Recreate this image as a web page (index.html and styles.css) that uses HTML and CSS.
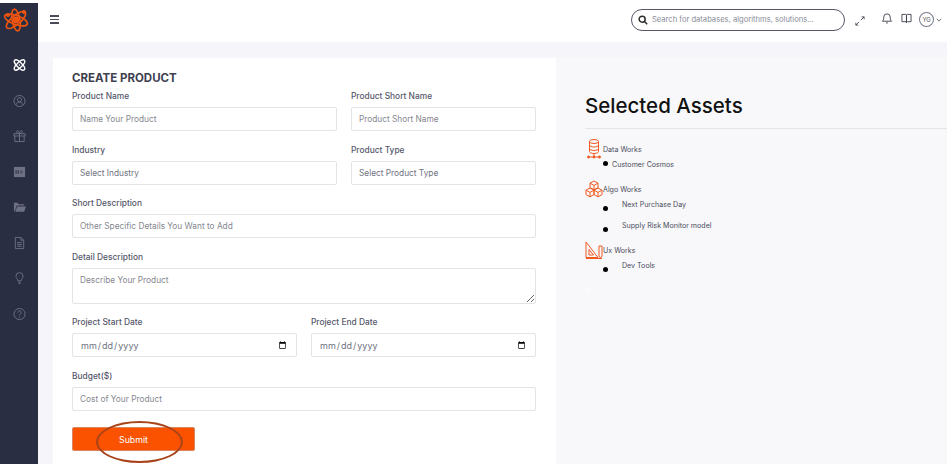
FILE: index.html
```html
<!DOCTYPE html>
<html>
  <head>
    <title>Create Product</title>
    <link rel="stylesheet" href="styles.css">
  </head>
  <body>
    <div class="app">
      <nav class="sidebar">
        <svg class="logo" viewBox="0 0 26 26" fill="none" stroke="#ee5510" stroke-width="1.600">
          <ellipse cx="13" cy="13" rx="12" ry="4.500" transform="rotate(20 13 13)"/>
          <ellipse cx="13" cy="13" rx="12" ry="4.500" transform="rotate(-40 13 13)"/>
          <ellipse cx="13" cy="13" rx="11" ry="4" transform="rotate(80 13 13)"/>
          <circle cx="13" cy="13" r="2.600" fill="#ee5510"/>
          <circle cx="21" cy="5" r="1.200" fill="#ee5510"/>
          <circle cx="5" cy="8" r="1.200" fill="#ee5510"/>
        </svg>
        <svg class="nav-icon" viewBox="0 0 14 14" fill="none" stroke="#fff" stroke-width="1.500">
          <ellipse cx="7" cy="7" rx="7.300" ry="2.800" transform="rotate(45 7 7)"/>
          <ellipse cx="7" cy="7" rx="7.300" ry="2.800" transform="rotate(-45 7 7)"/>
          <circle cx="7" cy="7" r=".8" fill="#fff" stroke="none"/>
        </svg>
        <svg class="nav-icon" viewBox="0 0 14 14" fill="none" stroke="#6e7183" stroke-width="1">
          <circle cx="7" cy="7" r="6"/>
          <circle cx="7" cy="5.600" r="2.200"/>
          <path d="M3 11.200c.8-2 2.200-2.800 4-2.800s3.200.8 4 2.800"/>
        </svg>
        <svg class="nav-icon" viewBox="0 0 14 14" fill="none" stroke="#6e7183" stroke-width="1">
          <path d="M1 4.500h12v2.500H1zM2 7v6h10V7M7 4.500V13M7 4.500C5 4.500 3.500 3.500 4 2s2.500-1 3 2.500c.5-3.500 2.500-4 3-2.500s-1 2.500-3 2.500"/>
        </svg>
        <svg class="nav-icon" viewBox="0 0 14 14">
          <rect x="1" y="1.500" width="12" height="11" fill="#6e7183"/>
          <path d="M3 5.500v3M3 5.500h1l.7 1.500-.7 1.500H3M6.500 5.500h-1v3h1M5.500 7h1M8 5.500l1 3 1-3" fill="none" stroke="#2a2e43" stroke-width=".7"/>
        </svg>
        <svg class="nav-icon" viewBox="0 0 14 14" fill="#6e7183">
          <path d="M1 2.500h4l1.200 1.500H12v1.500H4L2 11.500H1z"/>
          <path d="M4.500 6.500H14l-2 5.500H2.500z"/>
        </svg>
        <svg class="nav-icon" viewBox="0 0 14 14" fill="none" stroke="#6e7183" stroke-width="1">
          <path d="M2.500 1h6l3 3v9h-9zM8.500 1v3h3M4.500 6.500h5M4.500 8.500h5M4.500 10.500h5"/>
        </svg>
        <svg class="nav-icon" viewBox="0 0 14 14" fill="none" stroke="#6e7183" stroke-width="1">
          <path d="M5.200 10c0-1.700-2-2.700-2-5a3.800 3.800 0 0 1 7.600 0c0 2.300-2 3.300-2 5zM5.500 11.500h3M6 13h2"/>
        </svg>
        <svg class="nav-icon" viewBox="0 0 14 14" fill="none" stroke="#6e7183" stroke-width="1">
          <circle cx="7" cy="7" r="6"/>
          <path d="M5.200 5.400a1.800 1.800 0 1 1 2.800 1.500c-.7.500-1 .8-1 1.600M7 9.800v1"/>
        </svg>
      </nav>

      <div class="content">
        <header class="topbar">
          <div class="burger"><span></span><span></span><span></span></div>
          <div class="search">
            <svg class="search-icon" viewBox="0 0 12 12" fill="none" stroke="#2b2b2b" stroke-width="1.800">
              <circle cx="5" cy="5" r="3.600"/>
              <path d="M7.800 7.800l3.200 3.200"/>
            </svg>
            <span>Search for databases, algorithms, solutions...</span>
          </div>
          <svg class="expand" viewBox="0 0 12 12" fill="none" stroke="#3f4150" stroke-width="1">
            <path d="M7 5l4-4M8 1h3v3M5 7l-4 4M1 8v3h3"/>
          </svg>
          <svg class="bell" viewBox="0 0 12 13" fill="none" stroke="#3f4150" stroke-width="1">
            <path d="M1 10c1-1 1.500-1.500 1.500-4.500a3.500 3.500 0 0 1 7 0C9.500 8.500 10 9 11 10zM5 11.800h2"/>
          </svg>
          <svg class="book" viewBox="0 0 12 12" fill="none" stroke="#3f4150" stroke-width="1">
            <path d="M1 1.500h4c.6 0 1 .4 1 1v8c0-.6-.4-1-1-1H1zM11 1.500H7c-.6 0-1 .4-1 1v8c0-.6.4-1 1-1h4z"/>
          </svg>
          <div class="avatar">YG</div>
          <svg class="caret" viewBox="0 0 8 5" fill="none" stroke="#3f4150" stroke-width="1"><path d="M1 1l3 3 3-3"/></svg>
        </header>

        <main class="page">
          <form class="card">
            <h2 class="card-title">CREATE PRODUCT</h2>
            <div class="row row-main">
              <div class="field">
                <label>Product Name</label>
                <input type="text" placeholder="Name Your Product">
              </div>
              <div class="field">
                <label>Product Short Name</label>
                <input type="text" placeholder="Product Short Name">
              </div>
            </div>
            <div class="row row-main">
              <div class="field">
                <label>Industry</label>
                <select><option>Select Industry</option></select>
              </div>
              <div class="field">
                <label>Product Type</label>
                <select><option>Select Product Type</option></select>
              </div>
            </div>
            <div class="field">
              <label>Short Description</label>
              <input type="text" placeholder="Other Specific Details You Want to Add">
            </div>
            <div class="field">
              <label>Detail Description</label>
              <textarea placeholder="Describe Your Product"></textarea>
            </div>
            <div class="row row-dates">
              <div class="field">
                <label>Project Start Date</label>
                <input type="date">
              </div>
              <div class="field">
                <label>Project End Date</label>
                <input type="date">
              </div>
            </div>
            <div class="field">
              <label>Budget($)</label>
              <input type="text" placeholder="Cost of Your Product">
            </div>
            <div class="submit-wrap">
              <button class="submit" type="button">Submit</button>
              <div class="circle-mark"></div>
            </div>
          </form>

          <aside class="assets">
            <h1 class="assets-title">Selected Assets</h1>
            <div class="asset-group">
              <div class="group-head group-data">
                <svg class="group-icon icon-data" viewBox="0 0 14 20" fill="none" stroke="#f0591f" stroke-width="1">
                  <ellipse cx="7" cy="2.500" rx="4.500" ry="2"/>
                  <path d="M2.500 2.500v10c0 1.100 2 2 4.500 2s4.500-.9 4.500-2v-10M2.500 6c0 1.100 2 2 4.500 2s4.500-.9 4.500-2M2.500 9.500c0 1.100 2 2 4.500 2s4.500-.9 4.500-2M7 14.500V18M1 18h12"/>
                  <circle cx="1.500" cy="18" r="1" fill="#f0591f"/>
                  <circle cx="7" cy="18" r="1" fill="#f0591f"/>
                  <circle cx="12.500" cy="18" r="1" fill="#f0591f"/>
                </svg>
                <span>Data Works</span>
              </div>
              <div class="asset asset-near"><i class="dot"></i><span>Customer Cosmos</span></div>
            </div>
            <div class="asset-group">
              <div class="group-head group-algo">
                <svg class="group-icon icon-algo" viewBox="0 0 18 18" fill="none" stroke="#f0591f" stroke-width="1">
                  <path d="M9 1l4 2.200v4.400L9 9.800 5 7.600V3.200zM5 3.200l4 2.200 4-2.200M9 5.400v4.400"/>
                  <path d="M5 8l4 2.200v4.400L5 16.800l-4-2.200v-4.400zM1 10.200l4 2.200 4-2.200M5 12.400v4.400"/>
                  <path d="M13 8l4 2.200v4.400l-4 2.200-4-2.200v-4.400zM9 10.200l4 2.200 4-2.200M13 12.400v4.400"/>
                </svg>
                <span>Algo Works</span>
              </div>
              <div class="asset"><i class="dot"></i><span>Next Purchase Day</span></div>
              <div class="asset"><i class="dot"></i><span>Supply Risk Monitor model</span></div>
            </div>
            <div class="asset-group">
              <div class="group-head group-ux">
                <svg class="group-icon icon-ux" viewBox="0 0 18 18" fill="none" stroke="#f0591f" stroke-width="1">
                  <path d="M1 1l12 15.500H1zM4 8.500l4.500 5.500H4zM1 17.500h16"/>
                  <path d="M14 5h3v10l-1.500 2-1.500-2z"/>
                </svg>
                <span>Ux Works</span>
              </div>
              <div class="asset"><i class="dot"></i><span>Dev Tools</span></div>
            </div>
            <div class="asset-count">0</div>
          </aside>
        </main>
      </div>
    </div>
  </body>
</html>
```

FILE: styles.css
```css
* { box-sizing: border-box; }
html, body { height: 100%; }
body { margin: 0; overflow: hidden; background: #fff; font-family: "Inter", "Open Sans", sans-serif; color: #4a4c5a; }

.app { display: flex; height: 464px; padding-top: 3px; }
.sidebar { width: 38px; flex: none; background: #2a2e43; display: flex; flex-direction: column; align-items: center; }
.logo { width: 26px; height: 26px; margin: 4px 7px 25px 0; }
.nav-icon { width: 13px; height: 14px; margin-bottom: 21.500px; }

.content { flex: 1; min-width: 0; display: flex; flex-direction: column; margin-top: -3px; }
.topbar { height: 42px; flex: none; background: #fff; display: flex; align-items: center; padding: 0 5px 3px 12px; }
.burger { width: 9px; display: flex; flex-direction: column; gap: 2px; margin-right: 572px; }
.burger span { height: 1.500px; background: #4a4c5a; }
.search { width: 215px; height: 22px; border: 1px solid #55586a; border-radius: 11px; display: flex; align-items: center; padding-left: 6px; font-size: 7.600px; color: #8a8c98; white-space: nowrap; }
.search-icon { width: 10px; height: 10px; margin-right: 4px; flex: none; }
.expand { width: 10px; height: 10px; margin-left: 10px; margin-top: 2px; }
.bell { width: 12px; height: 12px; margin-left: 16px; margin-top: -3px; }
.book { width: 11px; height: 11px; margin-left: 8px; margin-top: -3px; }
.avatar { width: 15px; height: 15px; margin-left: 7px; border: 1px solid #777a88; border-radius: 50%; font-size: 6px; display: flex; align-items: center; justify-content: center; color: #555; }
.caret { width: 6px; height: 4px; margin-left: 2px; }

.page { flex: 1; min-height: 0; background: #f5f5fa; padding: 16px 0 0 15px; display: flex; }
.card { width: 503px; flex: none; background: #fff; padding: 13px 20px 0 19px; display: flex; flex-direction: column; }
.card-title { margin: 0 0 6px; font-size: 11.500px; line-height: 14px; font-weight: 700; color: #3f4150; }

.row { display: grid; gap: 14px; }
.row-main { grid-template-columns: 265px 185px; }
.row-dates { grid-template-columns: 225px 225px; }
.field { display: flex; flex-direction: column; padding-bottom: 13.500px; }
.field label { font-size: 8.400px; line-height: 11px; font-weight: 500; color: #55576a; margin-bottom: 5px; }
.field input, .field select, .field textarea { width: 100%; height: 24px; border: 1px solid #e3e4e8; border-radius: 2px; background: #fff; padding: 0 7px; margin: 0; font-family: inherit; font-size: 8.300px; color: #6f7280; outline: none; }
.field select { appearance: none; -webkit-appearance: none; }
.field input::placeholder, .field textarea::placeholder { color: #85878f; opacity: 1; }
.field input[type="date"] { font-size: 9px; }
.field textarea { height: 36px; padding-top: 6px; display: block; resize: vertical; }

.submit-wrap { position: relative; margin-top: 3px; }
.submit { width: 123px; height: 24px; background: #fb5200; border: 1px solid #d8865f; border-radius: 2px; color: #fff; font-family: inherit; font-size: 8.800px; display: block; }
.circle-mark { position: absolute; left: 24px; top: -6px; width: 87px; height: 42px; border: 2px solid #a8431a; border-radius: 50%; pointer-events: none; }

.assets { flex: 1; min-width: 0; background: #f8f8fb; padding: 36px 0 0 29px; font-size: 7.100px; color: #4a4c5a; }
.assets-title { margin: 0; padding-bottom: 10px; border-bottom: 1px solid #e4e4e8; font-size: 20.500px; line-height: 24px; font-weight: 500; color: #111; }
.asset-group { display: flex; flex-direction: column; }
.group-head { display: flex; align-items: center; height: 18px; }
.group-data { margin-top: 11px; }
.group-algo { margin-top: 4px; }
.group-ux { margin-top: 1px; }
.group-icon { flex: none; }
.icon-data { width: 14px; height: 20px; margin: 0 2px; }
.icon-algo { width: 18px; height: 18px; }
.icon-ux { width: 18px; height: 18px; }
.asset { display: flex; align-items: flex-start; height: 21px; margin-left: 18px; padding-top: 2px; }
.asset .dot { width: 5px; height: 5px; background: #000; border-radius: 50%; margin-top: 6px; margin-right: 14px; flex: none; }
.asset-near { height: 18px; padding-top: 2px; }
.asset-near .dot { margin-top: 1px; margin-right: 4px; }
.asset-count { color: #fff; margin-top: 6px; }
```
